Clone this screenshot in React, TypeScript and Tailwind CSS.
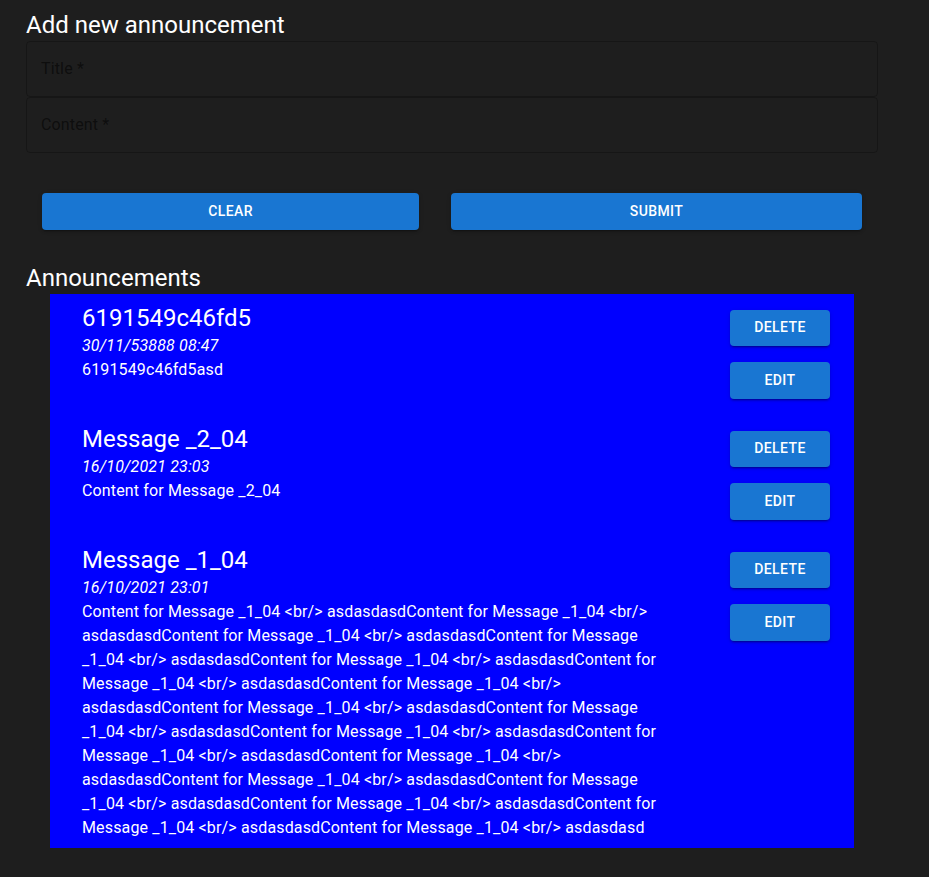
import React from "react";

const items = [
  { title: "6191549c46fd5", date: "30/11/53888 08:47", content: "6191549c46fd5asd" },
  { title: "Message _2_04", date: "16/10/2021 23:03", content: "Content for Message _2_04" },
  {
    title: "Message _1_04",
    date: "16/10/2021 23:01",
    content: Array(17).fill("Content for Message _1_04 <br/> asdasdasd").join(""),
  },
];

function Field({ label }: { label: string }) {
  return (
    <div className="h-[56px] rounded border border-black/25 flex items-center px-[14px]">
      <span className="text-[16px] tracking-[0.15px] text-black/55">{label}</span>
    </div>
  );
}

const shadow =
  "shadow-[0_3px_1px_-2px_rgba(0,0,0,0.2),0_2px_2px_0_rgba(0,0,0,0.14),0_1px_5px_0_rgba(0,0,0,0.12)]";

function SmallBtn({ children }: { children: React.ReactNode }) {
  return (
    <button
      className={`w-[100px] h-[36.5px] rounded bg-[#1976d2] text-white text-[14px] font-medium tracking-[0.4px] uppercase ${shadow}`}
    >
      {children}
    </button>
  );
}

export default function App() {
  return (
    <div
      className="min-h-[877px] bg-[#1e1e1e] text-white px-[26px] pt-[9px] pb-[29px]"
      style={{ fontFamily: "Roboto, 'Liberation Sans', sans-serif" }}
    >
      <div className="w-[852px]">
        <h2 className="text-[24px] leading-[32px]">Add new announcement</h2>
        <div className="flex flex-col">
          <Field label="Title *" />
          <Field label="Content *" />
        </div>
        <div className="flex gap-[32px] pl-[16px] mt-[40px]">
          <button
            className={`w-[377px] h-[36.5px] rounded bg-[#1976d2] text-white text-[14px] font-medium tracking-[0.4px] ${shadow}`}
          >
            CLEAR
          </button>
          <button
            className={`w-[411px] h-[36.5px] rounded bg-[#1976d2] text-white text-[14px] font-medium tracking-[0.4px] ${shadow}`}
          >
            SUBMIT
          </button>
        </div>
        <h2 className="text-[24px] leading-[32px] mt-[32px]">Announcements</h2>
      </div>
      <div className="ml-[24px] w-[804px] bg-[#0000ff]">
        {items.map((it, i) => (
          <div key={i} className="flex items-start pl-[32px] pr-[24px]">
            <div className="flex-1 min-w-0 py-[8px] pr-[48px]">
              <div className="text-[24px] leading-[32px]">{it.title}</div>
              <div className="text-[16px] leading-[24px] tracking-[0.15px] italic">{it.date}</div>
              <div className="text-[16px] leading-[24px] tracking-[0.15px] break-words">{it.content}</div>
            </div>
            <div className="flex flex-col gap-[16px] py-[16px] shrink-0">
              <SmallBtn>Delete</SmallBtn>
              <SmallBtn>Edit</SmallBtn>
            </div>
          </div>
        ))}
      </div>
    </div>
  );
}
